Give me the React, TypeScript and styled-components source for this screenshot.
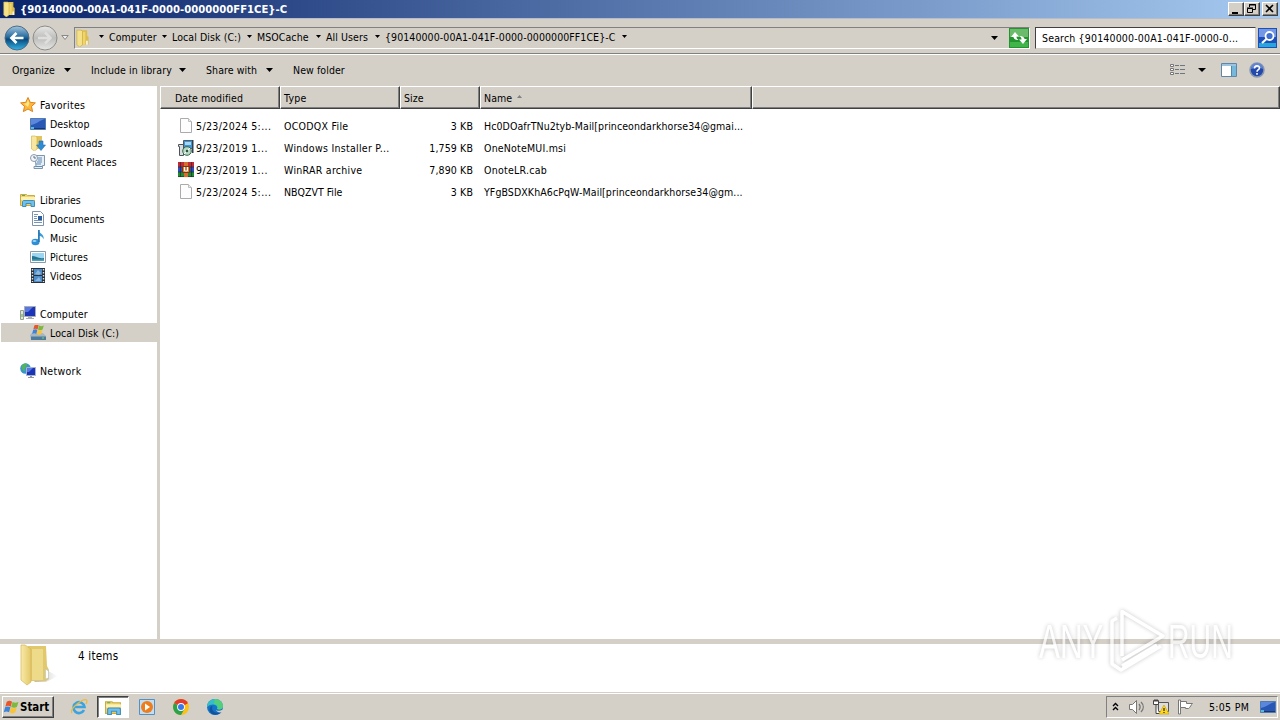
import styled, { createGlobalStyle } from "styled-components";

const GlobalStyle = createGlobalStyle`
  * { box-sizing: border-box; }
  html, body { margin: 0; overflow: hidden; }
  body {
    font: 10.5px "DejaVu Sans Condensed", "DejaVu Sans", sans-serif;
    font-stretch: condensed;
    letter-spacing: .08px;
    color: #000;
  }
  svg { display: block; flex: none; }
`;

const Window = styled.div`
  width: 1280px;
  height: 720px;
  display: flex;
  flex-direction: column;
  background: #d4d0c8;
  white-space: pre;
`;

const Text = styled.div<{ $track?: number }>`
  letter-spacing: ${(p) => p.$track ?? 0.08}px;
`;

/* title bar */

const TitleBar = styled.div`
  height: 19px;
  display: flex;
  align-items: center;
  padding: 0 2px;
  gap: 4px;
  background: linear-gradient(90deg, #0a246a, #a6caf0);
  border-bottom: 1px solid #b5bccf;
  color: #fff;
`;

const Title = styled.div`
  flex: 1;
  font-size: 11.2px;
  font-weight: bold;
  letter-spacing: 0;
`;

const CaptionButtons = styled.div`
  display: flex;
`;

const CaptionButton = styled.div<{ $gap?: boolean }>`
  width: 16px;
  height: 14px;
  margin-left: ${(p) => (p.$gap ? 2 : 0)}px;
  background: #d4d0c8;
  border: 1px solid;
  border-color: #fff #404040 #404040 #fff;
  box-shadow: inset -1px -1px #808080;
`;

/* address bar */

const AddressRow = styled.div`
  height: 35px;
  display: flex;
  align-items: center;
  padding: 2px 2px 0 4px;
  border-top: 1px solid #d4d0c8;
  border-bottom: 1px solid #808080;
`;

const AddressBox = styled.div`
  width: 956px;
  height: 22px;
  margin-left: 5px;
  display: flex;
  align-items: center;
  border: 1px solid;
  border-color: #808080 #fff #fff #808080;
`;

const CrumbList = styled.div`
  display: flex;
  gap: 5px;
  padding: 0 0 2px 9px;
  align-items: center;
`;

const Crumb = styled.div<{ $width: number }>`
  width: ${(p) => p.$width}px;
  display: flex;
  align-items: center;
  justify-content: space-between;
`;

const Fill = styled.div`
  flex: 1;
`;

const SearchBox = styled.div`
  width: 221px;
  height: 22px;
  margin-left: 5px;
  padding: 0 0 0 6px;
  line-height: 20px;
  letter-spacing: .17px;
  background: #fff;
  border: 1px solid;
  border-color: #404040 #d4d0c8 #d4d0c8 #404040;
`;

/* toolbar */

const Toolbar = styled.div`
  height: 32px;
  display: flex;
  align-items: center;
  padding: 0 15px 1px 12px;
  border-top: 1px solid #fff;
`;

const ToolItem = styled.div<{ $width: number }>`
  width: ${(p) => p.$width}px;
  display: flex;
  align-items: center;
  justify-content: space-between;
  margin-right: 20px;
`;

/* body */

const Body = styled.div`
  height: 553px;
  display: flex;
  background: #fff;
`;

const Sidebar = styled.div`
  width: 160px;
  padding: 9px 0 0 1px;
  border-right: 3px solid #d4d0c8;
`;

const TreeItem = styled.div<{ $child?: boolean; $selected?: boolean }>`
  height: 19px;
  display: flex;
  align-items: center;
  gap: 4px;
  padding-left: ${(p) => (p.$child ? 29 : 19)}px;
  background: ${(p) => (p.$selected ? "#d4d0c8" : "transparent")};
`;

const Gap = styled.div`
  height: 19px;
`;

const Files = styled.div`
  flex: 1;
`;

const Columns = styled.div`
  height: 23px;
  display: flex;
  margin-bottom: 6px;
`;

const Column = styled.div<{ $width?: number; $pad?: number }>`
  ${(p) => (p.$width ? `width: ${p.$width}px;` : "flex: 1;")}
  display: flex;
  align-items: center;
  gap: 4px;
  padding: 0 0 0 ${(p) => p.$pad ?? 3}px;
  background: #d4d0c8;
  border: 1px solid;
  border-color: #fff #404040 #404040 #fff;
  box-shadow: inset -1px -1px #808080;
`;

const FileRow = styled.div`
  height: 22px;
  display: grid;
  grid-template-columns: 19px 88px 119px 70px 270px;
  align-items: center;
  padding-left: 17px;
`;

const Size = styled.div`
  text-align: right;
  letter-spacing: .12px;
`;

const NameCell = styled(Text)`
  padding-left: 11px;
`;

/* details pane */

const Details = styled.div`
  height: 54px;
  display: flex;
  padding-left: 18px;
  background: #fff;
  border-top: 5px solid #d4d0c8;
  border-bottom: 1px solid #d4d0c8;
`;

const Count = styled.div`
  padding: 5px 0 0 18px;
  font-size: 11.6px;
  letter-spacing: .2px;
`;

const Watermark = styled.svg`
  position: absolute;
  left: 1020px;
  top: 600px;
  overflow: visible;
  font-family: "Liberation Sans Narrow", "Liberation Sans", sans-serif;
  letter-spacing: 0;
  filter: drop-shadow(0 0 2px rgba(0, 0, 0, 0.3));
  opacity: .72;
`;

/* taskbar */

const Taskbar = styled.div`
  height: 27px;
  display: flex;
  align-items: center;
  padding: 0 2px;
  background: #d4d0c8;
  border-top: 1px solid #fff;
`;

const StartButton = styled.div`
  width: 52px;
  height: 22px;
  display: flex;
  align-items: center;
  gap: 1px;
  border: 1px solid;
  border-color: #fff #404040 #404040 #fff;
  box-shadow: inset -1px -1px #808080;
  font-size: 11.4px;
  font-weight: bold;
  letter-spacing: 0;
`;

const TaskButton = styled.div<{ $active?: boolean }>`
  width: 34px;
  height: 22px;
  display: grid;
  place-items: center;
  ${(p) =>
    p.$active &&
    `
    width: 32px;
    margin: 0 1px;
    background: #fff;
    border: 1px solid;
    border-color: #404040 #fff #fff #404040;
    box-shadow: inset 1px 1px #808080;
  `}
`;

const Tray = styled.div`
  width: 172px;
  height: 22px;
  display: flex;
  align-items: center;
  padding-left: 4px;
  border: 1px solid;
  border-color: #808080 #fff #fff #808080;
`;

const Clock = styled.div`
  width: 51px;
  margin-left: 15px;
  letter-spacing: .3px;
`;

/* icons */

const Arrow = ({ w = 5 }: { w?: number }) => (
  <svg width={w} height={w > 5 ? 4 : 3} viewBox="0 0 6 4" preserveAspectRatio="none">
    <path d="M0 0h6L3 4z" />
  </svg>
);

const FolderIcon = ({ w = 16, h = 16 }: { w?: number; h?: number }) => (
  <svg width={w} height={h} viewBox="0 0 16 16" preserveAspectRatio="none">
    <path d="M6 1h7v5l1.500 1v7H7z" fill="#dcbd4c" />
    <path d="M2 1h4.500L8 2v12l-3 2-3-2z" fill="#f5e18a" stroke="#cda939" strokeWidth=".6" />
    <path d="M8.500 2.500H11V14H8.500z" fill="#efd570" />
    <path d="M12 10.500h1.500V14H12z" fill="#fff" />
  </svg>
);

const BackIcon = () => (
  <svg width="26" height="26" viewBox="0 0 26 26">
    <defs>
      <linearGradient id="back" x2="0" y2="1">
        <stop offset="0" stopColor="#a4c5dd" />
        <stop offset=".45" stopColor="#286da0" />
        <stop offset=".55" stopColor="#08497c" />
        <stop offset="1" stopColor="#35b4e6" />
      </linearGradient>
    </defs>
    <circle cx="13" cy="13" r="12" fill="url(#back)" stroke="#4d6c86" />
    <path d="M19.500 13H8M12.500 8l-5 5 5 5" fill="none" stroke="#fff" strokeWidth="2.700" />
  </svg>
);

const ForwardIcon = () => (
  <svg width="26" height="26" viewBox="0 0 26 26">
    <defs>
      <linearGradient id="fwd" x2="0" y2="1">
        <stop offset="0" stopColor="#e8e8e6" />
        <stop offset=".5" stopColor="#bdbdbb" />
        <stop offset="1" stopColor="#e6e6e4" />
      </linearGradient>
    </defs>
    <circle cx="13" cy="13" r="12" fill="url(#fwd)" stroke="#8c8c8a" />
    <path d="M6 13h12M13 7.500l5.500 5.500-5.500 5.500" fill="none" stroke="#dededc" strokeWidth="2.500" />
  </svg>
);

const RefreshIcon = () => (
  <svg width="20" height="20" viewBox="0 0 20 20">
    <path d="M0 0h20v20H0z" fill="#23942f" />
    <path d="M1 1h18v8H1z" fill="#6cbb6c" />
    <path d="M1 14h18v5H1z" fill="#3fb54a" />
    <path d="M2 9l4-5 4 4.500H7.500c0 2 .8 2.500 2 3.500C6 12 4.500 10.500 4.500 9zM18 11l-4 5-4-4.500h2.500c0-2-.8-2.500-2-3.500 3.500 0 5 1.500 5 3z" fill="#fff" />
  </svg>
);

const SearchIcon = () => (
  <svg width="19" height="20" viewBox="0 0 19 20">
    <path d="M0 0h19v20H0z" fill="#1d4fbb" />
    <path d="M1 1h17v8H1z" fill="#7397e2" />
    <path d="M1 15h17v4H1z" fill="#27a6dc" />
    <circle cx="11.500" cy="8" r="4" fill="#3f6fd0" stroke="#fff" strokeWidth="1.800" />
    <path d="M8.500 11l-4.500 4" stroke="#fff" strokeWidth="2.200" />
  </svg>
);

const ViewIcon = () => (
  <svg width="16" height="14" viewBox="0 0 16 14">
    <path d="M.5 1.500h3v2h-3zM.5 5.500h3v2h-3zM.5 9.500h3v2h-3z" fill="#fff" stroke="#777" />
    <path d="M5 2.500h4m1 0h5M5 6.500h4m1 0h5M5 10.500h4m1 0h5" stroke="#6d7780" />
  </svg>
);

const PaneIcon = () => (
  <svg width="16" height="14" viewBox="0 0 16 14">
    <path d="M.5.5h15v13H.5z" fill="#fff" stroke="#5c87aa" />
    <path d="M1 1h14v2H1z" fill="#9cc4e0" />
    <path d="M10 3h5v10h-5z" fill="#75b8dc" />
    <path d="M10.500 3v10" stroke="#4f86ab" />
  </svg>
);

const HelpIcon = () => (
  <svg width="16" height="16" viewBox="0 0 16 16">
    <circle cx="8" cy="8" r="7" fill="#2449ad" stroke="#8797b0" strokeWidth="1.500" />
    <path d="M2 7a6 6 0 0 1 12 0c-4-2-8-1-12 0z" fill="#6084d2" />
    <path d="M5.500 6.500c0-3.500 5-3.300 5-.4C10.500 7.700 8 7.700 8 9.700m0 1.300v1.700" fill="none" stroke="#fff" strokeWidth="1.600" />
  </svg>
);

const StarIcon = () => (
  <svg width="16" height="16" viewBox="0 0 16 16">
    <path d="M8 .5l2.200 4.800 5.200.6-3.900 3.500 1.100 5.200L8 12l-4.600 2.600 1.100-5.200L.6 5.900l5.200-.6z" fill="#fab93a" stroke="#e0821c" />
    <path d="M8 2.500l1.300 3.700L8 10 4 6.700l2.500-.5z" fill="#ffe58c" />
  </svg>
);

const DesktopIcon = () => (
  <svg width="16" height="16" viewBox="0 0 16 16">
    <path d="M.5 2.500h15v11H.5z" fill="#2857b5" stroke="#547bb0" />
    <path d="M1 3h14c-5 1-8 5-14 6z" fill="#5b88dc" />
    <path d="M1 12h14v1H1z" fill="#17366e" />
    <path d="M1 11h3v2H1z" fill="#55b7d9" />
  </svg>
);

const DownloadsIcon = () => (
  <svg width="16" height="16" viewBox="0 0 16 16">
    <path d="M6 1h6v13H7z" fill="#e2c45c" />
    <path d="M1.500 1H5l2 1v12l-2.500 2-3-2z" fill="#f8e7a0" stroke="#cfae45" strokeWidth=".6" />
    <path d="M9 6h4v4h2.500L11 15.500 6.500 10H9z" fill="#2e8bd5" stroke="#256fab" strokeWidth=".6" />
  </svg>
);

const RecentIcon = () => (
  <svg width="16" height="16" viewBox="0 0 16 16">
    <path d="M5 1.500h9.500v10h-2v3H4v-2h2z" fill="#e6eef6" stroke="#7e95ab" />
    <path d="M8 4h4M8 6h4M7 8h5M6 10h5M6 12.500h6" stroke="#5f8bb5" />
    <circle cx="4" cy="4" r="3.500" fill="#f2f5f8" stroke="#8b9aab" />
    <path d="M4 2v2h2" fill="none" stroke="#55708f" />
  </svg>
);

const LibraryIcon = ({ size = 16 }: { size?: number }) => (
  <svg width={size} height={size} viewBox="0 0 16 16">
    <path d="M.5 2.500h6l1 1h7v10H.5z" fill="#efd56c" stroke="#c9aa45" />
    <path d="M1 5h14v3H1z" fill="#fdf2b4" />
    <path d="M2 3.500h3" stroke="#62a85c" />
    <path d="M2.500 14.500v-5l1-1h10l1 1v5H11v-3H6v3z" fill="#72bfe8" stroke="#3f8fbe" />
  </svg>
);

const DocIcon = () => (
  <svg width="16" height="16" viewBox="0 0 16 16">
    <path d="M2.500.5h8l3 3v11h-11z" fill="#fff" stroke="#7e93a8" />
    <path d="M4 3.500h4M4 5.500h3M4 7.500h3M4 9.500h8M4 11.500h8" stroke="#7895b6" />
    <path d="M8 5h4v4H8z" fill="#2c5d9e" />
  </svg>
);

const MusicIcon = () => (
  <svg width="16" height="16" viewBox="0 0 16 16">
    <path d="M8 0c0 3 7 4 5.500 9.500C12.500 6 10 6 9 6z" fill="#3a9bd6" />
    <ellipse cx="5.500" cy="12" rx="4" ry="3.200" fill="#2f8fd6" />
    <path d="M8 0h1.800v12H8z" fill="#2a7db8" />
    <ellipse cx="4.500" cy="11" rx="2" ry="1" fill="#9bd5f4" />
  </svg>
);

const PictureIcon = () => (
  <svg width="16" height="16" viewBox="0 0 16 16">
    <path d="M.5 2.500h15v11H.5z" fill="#fff" stroke="#8a9aa8" />
    <path d="M2 4h12v8H2z" fill="#9ad5f2" />
    <path d="M2 7c4 0 6 3 12 2v3H2z" fill="#28748e" />
    <path d="M2 10.500h12V12H2z" fill="#4fa4bd" />
  </svg>
);

const VideoIcon = () => (
  <svg width="16" height="16" viewBox="0 0 16 16">
    <path d="M1 0h14v15H1z" fill="#27323e" />
    <path d="M4 1h8v6H4zM4 8h8v6H4z" fill="#4f8dc9" />
    <path d="M5 6l3-4 3 3-2 2zM5 13l4-4 2 4z" fill="#8cb6dc" />
    <path d="M2.500 1v13M13.500 1v13" stroke="#dde4ea" strokeWidth="1.400" strokeDasharray="1.500 1.500" />
  </svg>
);

const ComputerIcon = () => (
  <svg width="16" height="16" viewBox="0 0 16 16">
    <path d="M4.500.5h11v10h-11z" fill="#1c35b8" stroke="#a6adb8" />
    <path d="M5 1h8l-5 5H5z" fill="#5a76e0" />
    <path d="M8 11h4v1h2v1H6v-1h2z" fill="#a9afb7" />
    <path d="M.5 4.500h3v9h-3z" fill="#dfe5da" stroke="#94a08e" />
    <path d="M2 8v3" stroke="#55a83c" />
  </svg>
);

const Flag = () => (
  <>
    <path d="M3.500 1c2-1 3-1 5 0L7.200 5.700c-2-1-3-1-5 0z" fill="#e8552a" />
    <path d="M9 1.300c2 1 3 1 5.500 0L13 6c-2 1-3.500 1-5.400 0z" fill="#7db93c" />
    <path d="M2 6.300c2-1 3-1 5 0L5.700 11c-2-1-3-1-5 0z" fill="#3d83d9" />
    <path d="M7.500 6.600c2 1 3.500 1 5.400 0l-1.400 4.700c-2 1-3.500 1-5.400 0z" fill="#f8c437" />
  </>
);

const DiskIcon = () => (
  <svg width="16" height="16" viewBox="0 0 16 16">
    <path d="M0 10l2-2h11l3 3v4H1z" fill="#a7b6c2" />
    <path d="M1 11.500h15V15H1z" fill="#4d7b9c" />
    <path d="M12 13h2" stroke="#6ee06a" />
    <g transform="translate(1.500 -.5) scale(.85)">
      <Flag />
    </g>
  </svg>
);

const NetworkIcon = () => (
  <svg width="16" height="16" viewBox="0 0 16 16">
    <circle cx="5.500" cy="5.500" r="5.300" fill="#3795cf" />
    <path d="M2 2.500c3-3 6-2 5 0S4 4.500 5 8C2 8 1 5 2 2.500z" fill="#55b35b" />
    <path d="M6.500 4.500h9v8h-9z" fill="#1c35b8" stroke="#a6b4cc" />
    <path d="M7 5h6l-4 4H7z" fill="#5677e4" />
    <path d="M10 13h2v1h2v1H8v-1h2z" fill="#8f98a5" />
  </svg>
);

const FileIcon = () => (
  <svg width="18" height="16" viewBox="0 0 18 16">
    <path d="M3.500.5h8l3 3v11h-11z" fill="#fdfdfd" stroke="#ababab" />
    <path d="M11.500.5v3h3" fill="#eee" stroke="#bdbdbd" />
  </svg>
);

const MsiIcon = () => (
  <svg width="18" height="16" viewBox="0 0 18 16">
    <path d="M6.500.5h9v8h-9z" fill="#3e93d0" stroke="#4c5a66" />
    <path d="M8 2h6v3H8z" fill="#a6d8f5" />
    <path d="M15 0h1.500v13H15z" fill="#33404c" />
    <path d="M1.500 4.500h5v11h-4v-9h-1z" fill="#d8dde0" stroke="#4d5459" />
    <circle cx="10" cy="11" r="4.300" fill="#b9d9c6" stroke="#37674c" />
    <path d="M10 11l3-3M10 11l-3 3" stroke="#f6fff9" />
    <circle cx="10" cy="11" r="1.200" fill="#28503a" />
  </svg>
);

const RarIcon = () => (
  <svg width="18" height="16" viewBox="0 0 18 16">
    <path d="M1 0h16v5H1z" fill="#c02a35" />
    <path d="M1 5h16v5H1z" fill="#2c4fc4" />
    <path d="M1 10h16v5H1z" fill="#1f8c34" />
    <path d="M1 5h16M1 10h16M1 14.600h16M3.500 0v15M14.500 0v15" stroke="#222" strokeWidth=".6" />
    <path d="M7 0h4v15H7z" fill="#d4702d" />
    <path d="M5.500 4.500h7v6h-7z" fill="#d9803a" stroke="#7a3517" />
    <path d="M7.500 5v4h3V5" fill="none" stroke="#fff" />
  </svg>
);

const BigFolder = () => (
  <svg width="42" height="44" viewBox="0 0 42 44">
    <defs>
      <linearGradient id="shade">
        <stop offset="0" stopColor="#888" stopOpacity=".6" />
        <stop offset="1" stopColor="#999" stopOpacity="0" />
      </linearGradient>
      <linearGradient id="front">
        <stop offset="0" stopColor="#f8eaa8" />
        <stop offset="1" stopColor="#e4c868" />
      </linearGradient>
    </defs>
    <path d="M28 26l12 6-12 6H16z" fill="url(#shade)" />
    <path d="M10 2h18l1 20 2 4v9l-3 2H13z" fill="#e2c86c" />
    <path d="M14 5h11v31H14z" fill="#eedb8a" />
    <path d="M3 1h4l6 4v33l-4 3-6-5z" fill="url(#front)" stroke="#d3b65a" strokeWidth=".7" />
    <path d="M27.500 25l3 2v7l-3 1z" fill="#fff" stroke="#b3c3cf" strokeWidth=".6" />
  </svg>
);

const IeIcon = () => (
  <svg width="18" height="18" viewBox="0 0 18 18">
    <path d="M14 12a5.500 5.500 0 1 1 .5-3H5" fill="none" stroke="#3aa3e0" strokeWidth="2.600" />
    <path d="M2 15C-1 11 13 0 16.500 2c1 1 .3 2.500-.5 4" fill="none" stroke="#e9bb3c" strokeWidth="1.300" />
  </svg>
);

const PlayerIcon = () => (
  <svg width="16" height="16" viewBox="0 0 16 16">
    <path d="M.5.5h15v15H.5z" fill="#c2def2" stroke="#5291c4" />
    <circle cx="8" cy="8" r="6" fill="#ee7d1b" />
    <path d="M6 4.500l5 3.500-5 3.500z" fill="#fff" />
  </svg>
);

const ChromeIcon = () => (
  <svg width="16" height="16" viewBox="0 0 16 16">
    <circle cx="8" cy="8" r="8" fill="#fbc116" />
    <path d="M8 8L1.100 4A8 8 0 0 1 14.900 4z" fill="#e33b2e" />
    <path d="M8 8L1.100 4A8 8 0 0 0 8 16l3.500-6z" fill="#2da14c" />
    <path d="M8 4h6.900L8 8z" fill="#e33b2e" />
    <circle cx="8" cy="8" r="3.900" fill="#fff" />
    <circle cx="8" cy="8" r="3" fill="#3b78e7" />
  </svg>
);

const EdgeIcon = () => (
  <svg width="16" height="16" viewBox="0 0 16 16">
    <circle cx="8" cy="8" r="8" fill="#1473c8" />
    <path d="M0 8C0-2 15-3 16 7c0 3-3 4-6 3 2-4-5-7-10-2z" fill="#35bfc4" />
    <path d="M8 0c5 0 8 4 8 7 0 3-3 4-6 3 2-2 0-5-3-5z" fill="#53cf7c" />
    <path d="M5.500 7c-2 5 3 8 9 6-3 4-11 4-12-2 0-2 1-4 3-4z" fill="#10539f" />
    <path d="M9 10c0 2 3 2.500 7 .5V13c-4 1-7 0-7-3z" fill="#d4d0c8" />
  </svg>
);

const SpeakerIcon = () => (
  <svg width="18" height="16" viewBox="0 0 18 16">
    <path d="M1.500 5.500h3l4-4v13l-4-4h-3z" fill="#fff" stroke="#777" />
    <path d="M11 5c1.500 2 1.500 4 0 6M13 3c3 3 3 7 0 10" fill="none" stroke="#777" strokeWidth="1.300" />
  </svg>
);

const NetTrayIcon = () => (
  <svg width="16" height="16" viewBox="0 0 16 16">
    <path d="M5.500 3.500h10v9h-10z" fill="#ddd" stroke="#555" />
    <path d="M5 14.500h10" stroke="#555" />
    <path d="M.5 1.500h5v4h-5zM3 6v8.500h3" fill="#fff" stroke="#444" />
    <path d="M2 0v3m2-3v3" stroke="#444" />
    <path d="M11 6l5 9H6z" fill="#ffd91c" stroke="#c79a00" strokeWidth=".6" />
    <path d="M11 9v3m0 1v1" stroke="#222" strokeWidth="1.200" />
  </svg>
);

const FlagTrayIcon = () => (
  <svg width="17" height="16" viewBox="0 0 17 16">
    <path d="M1.500 1v14h2V1z" fill="#fff" stroke="#777" />
    <path d="M3.500 2.500h6v2h6c-1.500 1-2 4-4 5h-3v-1h-5z" fill="#fff" stroke="#777" />
  </svg>
);

const crumbs = [
  { label: "Computer", width: 58 },
  { label: "Local Disk (C:)", width: 80 },
  { label: "MSOCache", width: 64 },
  { label: "All Users", width: 54 },
  { label: "{90140000-00A1-041F-0000-0000000FF1CE}-C", width: 242 },
];

const files = [
  { Icon: FileIcon, date: "5/23/2024 5:...", type: "OCODQX File", size: "3 KB", name: "Hc0DOafrTNu2tyb-Mail[princeondarkhorse34@gmai...", track: 0.08 },
  { Icon: MsiIcon, date: "9/23/2019 1...", type: "Windows Installer P...", size: "1,759 KB", name: "OneNoteMUI.msi", track: 0.2 },
  { Icon: RarIcon, date: "9/23/2019 1...", type: "WinRAR archive", size: "7,890 KB", name: "OnoteLR.cab", track: 0.27 },
  { Icon: FileIcon, date: "5/23/2024 5:...", type: "NBQZVT File", size: "3 KB", name: "YFgBSDXKhA6cPqW-Mail[princeondarkhorse34@gm...", track: 0.09 },
];

const tree = [
  { Icon: StarIcon, label: "Favorites", track: 0.3, children: [
    { Icon: DesktopIcon, label: "Desktop" },
    { Icon: DownloadsIcon, label: "Downloads" },
    { Icon: RecentIcon, label: "Recent Places" },
  ] },
  { Icon: LibraryIcon, label: "Libraries", track: 0, children: [
    { Icon: DocIcon, label: "Documents" },
    { Icon: MusicIcon, label: "Music" },
    { Icon: PictureIcon, label: "Pictures" },
    { Icon: VideoIcon, label: "Videos" },
  ] },
  { Icon: ComputerIcon, label: "Computer", children: [{ Icon: DiskIcon, label: "Local Disk (C:)" }] },
  { Icon: NetworkIcon, label: "Network", track: 0.3, children: [] },
];

const NavArrow = styled.div`
  margin-left: 3px;
`;

const IconSlot = styled.div<{ $left: number }>`
  margin-left: ${(p) => p.$left}px;
`;

const App = () => {
  return (
    <>
      <GlobalStyle />
      <Window>
        <TitleBar>
          <FolderIcon w={14} />
          <Title>{"{90140000-00A1-041F-0000-0000000FF1CE}-C"}</Title>
          <CaptionButtons>
            <CaptionButton>
              <svg width="14" height="12"><path d="M3 9h6v2H3z" /></svg>
            </CaptionButton>
            <CaptionButton>
              <svg width="14" height="12">
                <path d="M4.500 4V1.500h6v5H8M4 2h7M2.500 5.500h5v4h-5zM2 5h6" fill="none" stroke="#000" />
              </svg>
            </CaptionButton>
            <CaptionButton $gap>
              <svg width="14" height="12"><path d="M3 2l7 7M10 2L3 9" stroke="#000" strokeWidth="1.600" /></svg>
            </CaptionButton>
          </CaptionButtons>
        </TitleBar>

        <AddressRow>
          <BackIcon />
          <IconSlot $left={2}>
            <ForwardIcon />
          </IconSlot>
          <NavArrow>
            <svg width="8" height="6"><path d="M.8.5h6.400L4 4.500z" fill="#eee" stroke="#888" /></svg>
          </NavArrow>
          <AddressBox>
            <FolderIcon w={15} h={18} />
            <CrumbList>
              <Arrow />
              {crumbs.map(({ label, width }) => (
                <Crumb key={label} $width={width}>
                  {label}
                  <Arrow />
                </Crumb>
              ))}
            </CrumbList>
            <Fill />
            <Arrow w={7} />
            <IconSlot $left={11}>
              <RefreshIcon />
            </IconSlot>
          </AddressBox>
          <SearchBox>{"Search {90140000-00A1-041F-0000-0..."}</SearchBox>
          <IconSlot $left={2}>
            <SearchIcon />
          </IconSlot>
        </AddressRow>

        <Toolbar>
          <ToolItem $width={59}>Organize<Arrow w={7} /></ToolItem>
          <ToolItem $width={95}>Include in library<Arrow w={7} /></ToolItem>
          <ToolItem $width={67}>Share with<Arrow w={7} /></ToolItem>
          <ToolItem $width={60}>New folder</ToolItem>
          <Fill />
          <ViewIcon />
          <IconSlot $left={12}><Arrow w={8} /></IconSlot>
          <IconSlot $left={15}><PaneIcon /></IconSlot>
          <IconSlot $left={12}><HelpIcon /></IconSlot>
        </Toolbar>

        <Body>
          <Sidebar>
            {tree.map(({ Icon, label, track, children }) => (
              <div key={label}>
                <TreeItem>
                  <Icon />
                  <Text $track={track}>{label}</Text>
                </TreeItem>
                {children.map((child) => (
                  <TreeItem key={child.label} $child $selected={child.label === "Local Disk (C:)"}>
                    <child.Icon />
                    <Text>{child.label}</Text>
                  </TreeItem>
                ))}
                <Gap />
              </div>
            ))}
          </Sidebar>
          <Files>
            <Columns>
              <Column $width={120} $pad={14}>Date modified</Column>
              <Column $width={120}>
                <Text $track={0.3}>Type</Text>
              </Column>
              <Column $width={80}>Size</Column>
              <Column $width={272}>
                Name
                <svg width="7" height="5"><path d="M1 3h5L3.500 0z" fill="#808080" /></svg>
              </Column>
              <Column />
            </Columns>
            {files.map(({ Icon, date, type, size, name, track }) => (
              <FileRow key={name}>
                <Icon />
                <Text $track={0.38}>{date}</Text>
                <Text $track={type === "NBQZVT File" ? 0 : 0.28}>{type}</Text>
                <Size>{size}</Size>
                <NameCell $track={track}>{name}</NameCell>
              </FileRow>
            ))}
          </Files>
        </Body>

        <Details>
          <BigFolder />
          <Count>4 items</Count>
        </Details>

        <Taskbar>
          <StartButton>
            <svg width="16" height="15" viewBox="0 0 15 13"><Flag /></svg>
            Start
          </StartButton>
          <IconSlot $left={8}><TaskButton><IeIcon /></TaskButton></IconSlot>
          <TaskButton $active><LibraryIcon size={17} /></TaskButton>
          <TaskButton><PlayerIcon /></TaskButton>
          <TaskButton><ChromeIcon /></TaskButton>
          <TaskButton><EdgeIcon /></TaskButton>
          <Fill />
          <Tray>
            <svg width="9" height="12"><path d="M2 5l2.500-2.500L7 5M2 9l2.500-2.500L7 9" fill="none" stroke="#000" strokeWidth="1.400" /></svg>
            <IconSlot $left={8}><SpeakerIcon /></IconSlot>
            <IconSlot $left={7}><NetTrayIcon /></IconSlot>
            <IconSlot $left={8}><FlagTrayIcon /></IconSlot>
            <Clock>5:05 PM</Clock>
            <DesktopIcon />
          </Tray>
        </Taskbar>
      </Window>
      <Watermark width="250" height="90" viewBox="-10 0 250 90" fill="#fff">
        <text transform="translate(9 58) scale(.64 1)" fontSize="49">ANY</text>
        <text transform="translate(138 58) scale(.61 1)" fontSize="49">RUN</text>
        <g fill="none" stroke="#fff" strokeWidth="3.500" strokeLinejoin="round">
          <path d="M92 56V11.500L133 36 92 60" />
          <path d="M87 18l-5 3v43l9 6 40-24" />
          <path d="M92 66l35-21" />
        </g>
      </Watermark>
    </>
  );
};

export default App;
